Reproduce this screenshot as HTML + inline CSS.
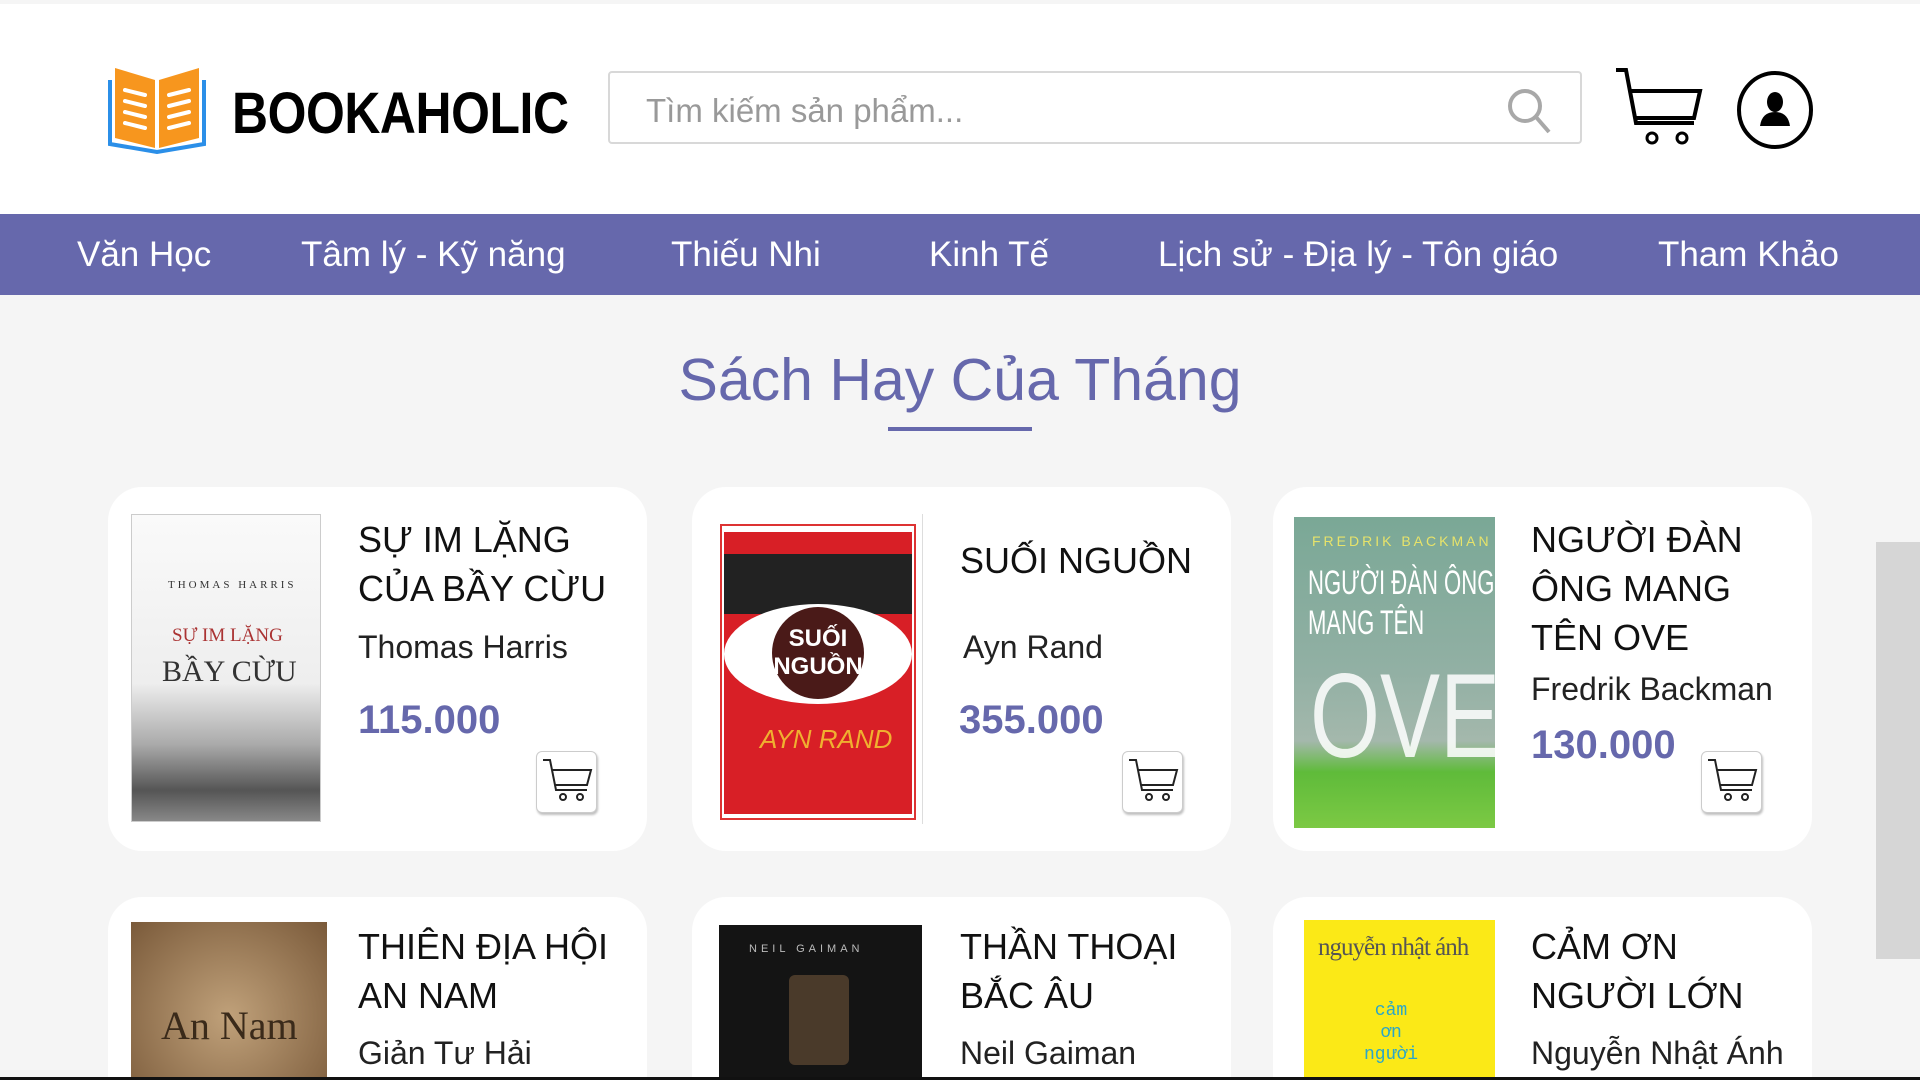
<!DOCTYPE html>
<html style="width:1920px;height:1080px;overflow:hidden"><head><meta charset="utf-8"><style>
*{margin:0;padding:0;box-sizing:border-box}
body{width:1920px;height:1080px;overflow:hidden;background:#f5f5f5;font-family:"Liberation Sans",sans-serif;position:relative}
.a{position:absolute}
header{position:absolute;left:0;top:4px;width:1920px;height:210px;background:#fff}
.nav{position:absolute;left:0;top:214px;width:1920px;height:81px;background:#6668ac}
.nav span{position:absolute;top:21px;color:#fff;font-size:35px;white-space:nowrap}
.card{position:absolute;background:#fff;border-radius:34px;width:539px;height:364px}
.t{position:absolute;font-size:36px;line-height:49px;color:#111;white-space:nowrap}
.au{position:absolute;font-size:32px;color:#222;white-space:nowrap}
.pr{position:absolute;font-size:40px;font-weight:bold;color:#6668ac}
.cb{position:absolute;width:61px;height:62px;border:1px solid #ccc;border-radius:6px;background:#fff;box-shadow:1px 2px 2px rgba(0,0,0,.25)}
.cov{position:absolute;overflow:hidden}
</style></head><body>
<header>
<svg class="a" style="left:107px;top:62px" width="100" height="88" viewBox="0 0 100 88">
<path d="M3 14 V78 L50 86 L97 78 V14" fill="none" stroke="#2b8fe8" stroke-width="4"/>
<path d="M8 2 L48 14 V82 L8 72Z" fill="#f7961e"/><path d="M52 14 L92 2 V72 L52 82Z" fill="#f7961e"/>
<g stroke="#fff" stroke-width="4" stroke-linecap="round"><line x1="18" y1="24" x2="38" y2="29"/><line x1="18" y1="35" x2="38" y2="40"/><line x1="18" y1="46" x2="38" y2="51"/><line x1="18" y1="57" x2="38" y2="62"/><line x1="62" y1="29" x2="82" y2="24"/><line x1="62" y1="40" x2="82" y2="35"/><line x1="62" y1="51" x2="82" y2="46"/><line x1="62" y1="62" x2="82" y2="57"/></g></svg>
<div class="a" style="left:232px;top:76px;font-size:58px;font-weight:bold;color:#000;transform:scaleX(.86);transform-origin:left top;letter-spacing:-0.5px">BOOKAHOLIC</div>
<div class="a" style="left:608px;top:67px;width:974px;height:73px;border:2px solid #d8d8d8;border-radius:4px;background:#fff"></div>
<div class="a" style="left:646px;top:88px;font-size:33px;color:#999">Tìm kiếm sản phẩm...</div>
<svg class="a" style="left:1505px;top:82px" width="50" height="50" viewBox="0 0 50 50"><circle cx="20" cy="20" r="15" fill="none" stroke="#a8a8a8" stroke-width="4"/><line x1="31" y1="31" x2="44" y2="46" stroke="#a8a8a8" stroke-width="4"/></svg>
<svg class="a" style="left:1614px;top:64px" width="90" height="80" viewBox="0 0 90 80"><path d="M2 2 H12 L22 55 H80" fill="none" stroke="#000" stroke-width="4"/><path d="M15 23 H86 L80 50 H20" fill="none" stroke="#000" stroke-width="4"/><circle cx="38" cy="70" r="5" fill="none" stroke="#000" stroke-width="3"/><circle cx="68" cy="70" r="5" fill="none" stroke="#000" stroke-width="3"/></svg>
<svg class="a" style="left:1736px;top:66px" width="78" height="80" viewBox="0 0 78 80"><ellipse cx="39" cy="40" rx="36" ry="37" fill="none" stroke="#000" stroke-width="4"/><ellipse cx="39" cy="32" rx="8" ry="10"/><path d="M24 56 Q26 42 39 42 Q52 42 54 56Z"/></svg>
</header>
<div class="nav">
<span style="left:77px">Văn Học</span><span style="left:301px">Tâm lý - Kỹ năng</span><span style="left:671px">Thiếu Nhi</span><span style="left:929px">Kinh Tế</span><span style="left:1158px">Lịch sử - Địa lý - Tôn giáo</span><span style="left:1658px">Tham Khảo</span>
</div>
<div class="a" style="left:0;top:346px;width:1920px;text-align:center;font-size:59px;color:#6668ac">Sách Hay Của Tháng</div>
<div class="a" style="left:888px;top:427px;width:144px;height:4px;background:#6668ac"></div>

<div class="card" style="left:108px;top:487px"></div>
<div class="card" style="left:692px;top:487px"></div>
<div class="card" style="left:1273px;top:487px"></div>
<div class="card" style="left:108px;top:897px;height:183px;border-radius:34px 34px 0 0"></div>
<div class="card" style="left:692px;top:897px;height:183px;border-radius:34px 34px 0 0"></div>
<div class="card" style="left:1273px;top:897px;height:183px;border-radius:34px 34px 0 0"></div>

<div class="cov" style="left:131px;top:514px;width:190px;height:308px;border:1px solid #ccc;background:linear-gradient(#fafafa 0%,#eee 55%,#aaa 75%,#555 90%,#888 100%)">
<div class="a" style="left:36px;top:64px;font-size:11px;letter-spacing:3px;color:#333;font-family:'Liberation Serif',serif">THOMAS HARRIS</div>
<div class="a" style="left:40px;top:110px;font-size:19px;color:#a33;font-family:'Liberation Serif',serif">SỰ IM LẶNG</div>
<div class="a" style="left:30px;top:140px;font-size:30px;color:#333;font-family:'Liberation Serif',serif">BẦY CỪU</div></div>
<div class="cov" style="left:710px;top:514px;width:213px;height:310px;background:#fff;border-right:1px solid #ddd">
<div class="a" style="left:10px;top:10px;width:196px;height:296px;border:2px solid #d33"></div>
<div class="a" style="left:14px;top:18px;width:188px;height:282px;background:#d81f26"></div>
<div class="a" style="left:14px;top:40px;width:188px;height:60px;background:#222"></div>
<div class="a" style="left:14px;top:90px;width:188px;height:100px;background:#fff;border-radius:50%"></div>
<div class="a" style="left:62px;top:93px;width:92px;height:92px;background:#4a1a18;border-radius:50%;color:#fff;font-weight:bold;font-size:24px;text-align:center;line-height:28px;padding-top:18px">SUỐI<br>NGUỒN</div>
<div class="a" style="left:50px;top:210px;color:#f0b030;font-size:26px;font-style:italic">AYN RAND</div></div>
<div class="cov" style="left:1294px;top:517px;width:201px;height:311px;background:linear-gradient(#7aa896 0%,#92b0a4 50%,#a4b8ac 72%,#5fbb3a 82%,#7cc944 100%)">
<div class="a" style="left:18px;top:16px;font-size:14px;letter-spacing:3px;color:#e7e36a">FREDRIK BACKMAN</div>
<div class="a" style="left:14px;top:46px;font-size:34px;color:#fff;line-height:40px;transform:scaleX(.65);transform-origin:left top;white-space:nowrap">NGƯỜI ĐÀN ÔNG<br>MANG TÊN</div>
<div class="a" style="left:16px;top:130px;font-size:120px;color:rgba(255,255,255,.85);transform:scaleX(.75);transform-origin:left top">OVE</div></div>

<div class="cov" style="left:131px;top:922px;width:196px;height:158px;background:radial-gradient(circle at 50% 60%,#c0a17a,#7a5a3a)">
<div class="a" style="left:30px;top:80px;font-size:40px;color:#3a2a1a;font-family:'Liberation Serif',serif">An Nam</div></div>
<div class="cov" style="left:719px;top:925px;width:203px;height:155px;background:#141414">
<div class="a" style="left:30px;top:18px;font-size:11px;letter-spacing:4px;color:#bbb">NEIL GAIMAN</div>
<div class="a" style="left:70px;top:50px;width:60px;height:90px;background:#4a3a2a;border-radius:6px"></div></div>
<div class="cov" style="left:1304px;top:920px;width:191px;height:160px;background:#fbe917">
<div class="a" style="left:14px;top:14px;font-size:25px;color:#555;font-family:'Liberation Serif',serif;letter-spacing:-1px">nguyễn nhật ánh</div>
<div class="a" style="left:60px;top:80px;font-size:18px;color:#2aa6c9;font-family:'Liberation Mono',monospace;line-height:22px;text-align:center">cảm<br>ơn<br>người</div></div>

<div class="t" style="left:358px;top:515px">SỰ IM LẶNG<br>CỦA BẦY CỪU</div>
<div class="au" style="left:358px;top:629px">Thomas Harris</div>
<div class="pr" style="left:358px;top:698px">115.000</div>
<div class="cb" style="left:536px;top:751px"></div>

<div class="t" style="left:960px;top:536px">SUỐI NGUỒN</div>
<div class="au" style="left:963px;top:629px">Ayn Rand</div>
<div class="pr" style="left:959px;top:698px">355.000</div>
<div class="cb" style="left:1122px;top:751px"></div>

<div class="t" style="left:1531px;top:515px">NGƯỜI ĐÀN<br>ÔNG MANG<br>TÊN OVE</div>
<div class="au" style="left:1531px;top:671px">Fredrik Backman</div>
<div class="pr" style="left:1531px;top:723px">130.000</div>
<div class="cb" style="left:1701px;top:751px"></div>

<div class="t" style="left:358px;top:922px">THIÊN ĐỊA HỘI<br>AN NAM</div>
<div class="au" style="left:358px;top:1035px">Giản Tư Hải</div>
<div class="t" style="left:960px;top:922px">THẦN THOẠI<br>BẮC ÂU</div>
<div class="au" style="left:960px;top:1035px">Neil Gaiman</div>
<div class="t" style="left:1531px;top:922px">CẢM ƠN<br>NGƯỜI LỚN</div>
<div class="au" style="left:1531px;top:1035px">Nguyễn Nhật Ánh</div>

<svg width="0" height="0" style="position:absolute"><defs><g id="c"><path d="M6 8 H13 L19 38 H50" fill="none" stroke="#222" stroke-width="2"/><path d="M15 18 H54 L50 33 H18" fill="none" stroke="#222" stroke-width="2"/><circle cx="26" cy="45" r="3" fill="none" stroke="#222" stroke-width="2"/><circle cx="43" cy="45" r="3" fill="none" stroke="#222" stroke-width="2"/></g></defs></svg>
<svg class="a" style="left:537px;top:752px" width="61" height="62"><use href="#c"/></svg>
<svg class="a" style="left:1123px;top:752px" width="61" height="62"><use href="#c"/></svg>
<svg class="a" style="left:1702px;top:752px" width="61" height="62"><use href="#c"/></svg>

<div class="a" style="left:1876px;top:542px;width:44px;height:417px;background:#d6d6d6"></div>
<div class="a" style="left:0;top:1077px;width:1920px;height:3px;background:#111"></div>
</body></html>
